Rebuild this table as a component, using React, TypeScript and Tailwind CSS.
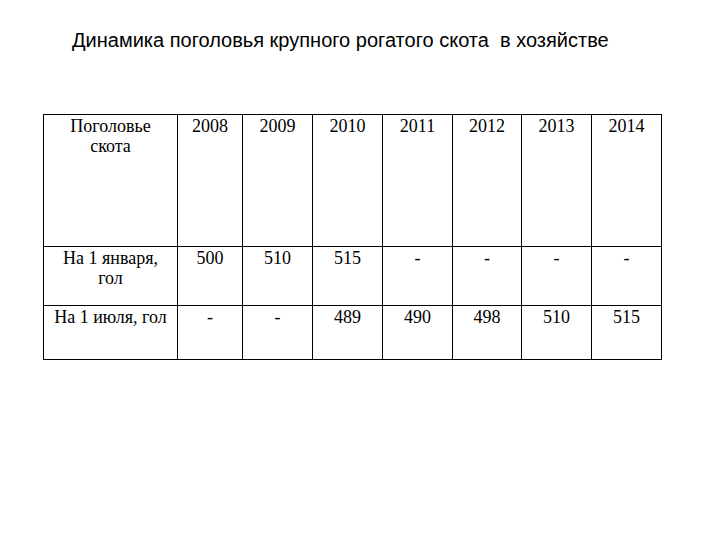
import React from "react";

const years = ["2008", "2009", "2010", "2011", "2012", "2013", "2014"];
const jan = ["500", "510", "515", "-", "-", "-", "-"];
const jul = ["-", "-", "489", "490", "498", "510", "515"];
const widths = ["w-[134px]", "w-[65px]", "w-[70px]", "w-[70px]", "w-[70px]", "w-[69px]", "w-[70px]", "w-[70px]"];

export default function App() {
  return (
    <div className="w-[720px] h-[540px] bg-white overflow-hidden">
      <div
        className="pl-[72px] pt-[28px] text-[20px] leading-[24px] text-black"
        style={{ fontFamily: '"Liberation Sans", Arial, sans-serif' }}
      >
        Динамика поголовья крупного рогатого скота&nbsp; в хозяйстве
      </div>
      <div className="pl-[43px] mt-[62px]">
        <table
          className="table-fixed border-collapse w-[619px] text-[18px] leading-[20px] text-black"
          style={{ fontFamily: '"Liberation Serif", "Times New Roman", serif' }}
        >
          <colgroup>
            {widths.map((w, i) => (
              <col key={i} className={w} />
            ))}
          </colgroup>
          <tbody>
            <tr className="h-[132px]">
              <td className="border border-black align-top text-center p-0 pt-[1px]">
                Поголовье
                <br />
                скота
              </td>
              {years.map((y) => (
                <td key={y} className="border border-black align-top text-center p-0 pt-[1px]">
                  {y}
                </td>
              ))}
            </tr>
            <tr className="h-[59px]">
              <td className="border border-black align-top text-center p-0 pt-[1px]">
                На 1 января,
                <br />
                гол
              </td>
              {jan.map((v, i) => (
                <td key={i} className="border border-black align-top text-center p-0 pt-[1px]">
                  {v}
                </td>
              ))}
            </tr>
            <tr className="h-[54px]">
              <td className="border border-black align-top text-center p-0 pt-[1px] whitespace-nowrap">
                На 1 июля, гол
              </td>
              {jul.map((v, i) => (
                <td key={i} className="border border-black align-top text-center p-0 pt-[1px]">
                  {v}
                </td>
              ))}
            </tr>
          </tbody>
        </table>
      </div>
    </div>
  );
}
